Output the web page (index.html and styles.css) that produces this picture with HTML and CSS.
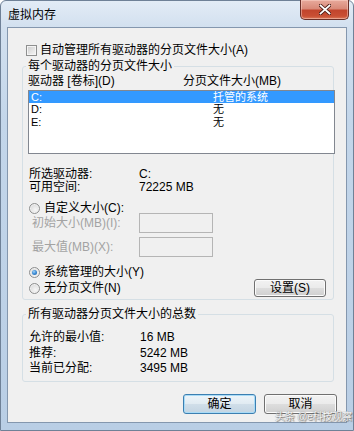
FILE: index.html
```html
<!DOCTYPE html>
<html lang="zh-CN">
<head>
<meta charset="utf-8">
<title>虚拟内存</title>
<link rel="stylesheet" href="styles.css">
</head>
<body>
<div class="window">
  <div class="titlebar">
    <span class="title">虚拟内存</span>
    <div class="close">
      <svg width="12" height="11" viewBox="0 0 12 11">
        <path d="M1.5 1.5 L10.5 9.5 M10.5 1.5 L1.5 9.5" stroke="#4a1a14" stroke-width="3.6" stroke-linecap="square" fill="none"/>
        <path d="M1.5 1.5 L10.5 9.5 M10.5 1.5 L1.5 9.5" stroke="#ffffff" stroke-width="1.8" stroke-linecap="square" fill="none"/>
      </svg>
    </div>
  </div>
  <div class="client">
    <div class="auto"><span class="checkbox"></span><span>自动管理所有驱动器的分页文件大小(A)</span></div>

    <fieldset class="group g1">
      <legend>每个驱动器的分页文件大小</legend>
      <div class="listhead"><span class="hc1">驱动器 [卷标](D)</span><span>分页文件大小(MB)</span></div>
      <div class="listbox">
        <div class="row sel"><span class="c1">C:</span><span>托管的系统</span></div>
        <div class="row"><span class="c1">D:</span><span>无</span></div>
        <div class="row"><span class="c1">E:</span><span>无</span></div>
      </div>
      <div class="info">
        <div class="kv"><span class="k">所选驱动器:</span><span>C:</span></div>
        <div class="kv"><span class="k">可用空间:</span><span>72225 MB</span></div>
      </div>
      <div class="opt custom"><span class="radio"></span><span>自定义大小(C):</span></div>
      <div class="field first"><span class="flabel">初始大小(MB)(I):</span><span class="input"></span></div>
      <div class="field second"><span class="flabel">最大值(MB)(X):</span><span class="input"></span></div>
      <div class="opt sys"><span class="radio on"></span><span>系统管理的大小(Y)</span></div>
      <div class="opt none"><span class="radio"></span><span>无分页文件(N)</span><span class="btn set">设置(S)</span></div>
    </fieldset>

    <fieldset class="group g2">
      <legend>所有驱动器分页文件大小的总数</legend>
      <div class="kv tot"><span class="k">允许的最小值:</span><span>16 MB</span></div>
      <div class="kv tot"><span class="k">推荐:</span><span>5242 MB</span></div>
      <div class="kv tot"><span class="k">当前已分配:</span><span>3495 MB</span></div>
    </fieldset>

    <div class="actions">
      <span class="btn default">确定</span>
      <span class="btn">取消</span>
    </div>
  </div>
  <div class="watermark">头条 @e科技观察</div>
</div>
</body>
</html>
```

FILE: styles.css
```css
* { box-sizing: border-box; }
html, body { margin: 0; padding: 0; }
body {
  width: 354px;
  height: 431px;
  overflow: hidden;
  font-family: "Liberation Sans", "Noto Sans CJK SC", sans-serif;
  font-size: 12px;
  color: #000;
  background: #ffffff;
}

.window {
  position: relative;
  width: 354px;
  height: 431px;
  border: 1px solid #6f8197;
  border-radius: 6px 6px 0 0;
  background: linear-gradient(to bottom, #e3ecf6 0px, #d2e0ef 26px, #c3d6ea 120px, #b9cee5 100%);
  display: flex;
  flex-direction: column;
}

.titlebar {
  height: 26px;
  display: flex;
  align-items: flex-start;
}
.title {
  padding: 7px 0 0 7px;
  line-height: 14px;
  font-size: 12px;
  color: #000;
}
.close {
  margin: -1px 4px 0 auto;
  width: 49px;
  height: 20px;
  border: 1px solid #6a2f28;
  border-top: none;
  border-radius: 0 0 5px 5px;
  background: linear-gradient(to bottom, #e8aa9c 0%, #d98a79 45%, #c2452d 55%, #c94f34 85%, #dc7a5a 100%);
  box-shadow: inset 0 0 0 1px rgba(255, 220, 210, 0.45);
  display: flex;
  align-items: center;
  justify-content: center;
}

.client {
  margin-left: 6px;
  width: 340px;
  height: 396px;
  background: #f0f0f0;
  border: 1px solid #8497ae;
  display: flex;
  flex-direction: column;
}

.auto {
  margin: 16px 0 0 18px;
  height: 13px;
  line-height: 13px;
  display: flex;
  align-items: center;
}
.checkbox {
  width: 11px;
  height: 11px;
  margin-right: 3px;
  border: 1px solid #8e8f8f;
  background: linear-gradient(135deg, #cbcbcb 0%, #e6e6e6 60%, #f6f6f6 100%);
  box-shadow: inset 0 0 0 1px #f4f4f4;
}

.group {
  margin: 0 12px 0 14px;
  border: 1px solid #d5dfe5;
  border-radius: 3px;
  min-width: 0;
}
.group legend {
  padding: 0 2px;
  margin-left: -2px;
  line-height: 13px;
}
.g1 {
  margin-top: 3px;
  padding: 0 0 2px 5px;
}
.g2 {
  margin-top: 8px;
  padding: 9px 0 4px 5px;
}

.listhead {
  margin-top: 2px;
  height: 13px;
  line-height: 13px;
  display: flex;
}
.hc1 { width: 155px; }

.listbox {
  margin: 2px -2px 0 0;
  height: 64px;
  border: 1px solid #828790;
  background: #ffffff;
}
.row {
  height: 12.4px;
  line-height: 12.4px;
  font-size: 11px;
  display: flex;
  padding-left: 2px;
}
.row .c1 { width: 182px; }
.row.sel { background: #3399ff; color: #ffffff; }

.info { margin-top: 14px; }
.kv {
  height: 13px;
  line-height: 13px;
  display: flex;
  padding-left: 1px;
}
.kv .k { width: 110px; }
.kv.tot { height: 15.5px; line-height: 15.5px; }
.kv.tot .k { width: 111px; }

.opt {
  display: flex;
  align-items: center;
  padding-left: 1px;
  height: 12px;
  line-height: 12px;
}
.opt.custom { margin-top: 8px; }
.opt.sys { margin-top: 9px; }
.opt.none { margin-top: 1px; height: 18px; }

.radio {
  width: 11px;
  height: 11px;
  margin-right: 4px;
  border: 1px solid #8e8f8f;
  border-radius: 50%;
  background: radial-gradient(circle at 60% 65%, #f7f7f7 0%, #e2e2e2 55%, #c9c9c9 100%);
  box-shadow: inset 0 0 0 1px #f2f2f2;
  display: flex;
  align-items: center;
  justify-content: center;
}
.radio.on::after {
  content: "";
  width: 5px;
  height: 5px;
  border-radius: 50%;
  background: radial-gradient(circle at 40% 35%, #a6d4f7 0%, #3f8fd8 45%, #1c5a9e 100%);
}

.field {
  display: flex;
  align-items: center;
  height: 20px;
  padding-left: 4px;
  color: #a3a3a3;
}
.field.first { margin-top: -1px; }
.field.second { margin-top: 4px; }
.flabel { width: 107px; line-height: 13px; }
.input {
  width: 74px;
  height: 20px;
  border: 1px solid #b5b5b5;
  background: #f0f0f0;
}

.btn {
  width: 73px;
  height: 20px;
  border: 1px solid #707070;
  border-radius: 3px;
  background: linear-gradient(to bottom, #f2f2f2 0%, #ebebeb 48%, #dddddd 52%, #cfcfcf 100%);
  box-shadow: inset 0 0 0 1px #fbfbfb;
  display: flex;
  align-items: center;
  justify-content: center;
  line-height: 14px;
}
.btn.set {
  margin: 0 7px 0 auto;
  width: 72px;
  height: 18px;
}
.btn.default {
  border-color: #3c7fb1;
  background: linear-gradient(to bottom, #eef5fa 0%, #e1ebf2 48%, #d0dee9 52%, #c3d4e2 100%);
  box-shadow: inset 0 0 0 1px #a8dbf7;
}

.actions {
  margin: 12px 9px 0 0;
  display: flex;
  justify-content: flex-end;
  gap: 8px;
}

.watermark {
  position: absolute;
  left: 274px;
  top: 410px;
  font-size: 10px;
  line-height: 12px;
  color: #f6f6f6;
  text-shadow: 0 0 1px #6b6b6b, 1px 1px 1px #7a7a7a;
  letter-spacing: -0.2px;
}
```
